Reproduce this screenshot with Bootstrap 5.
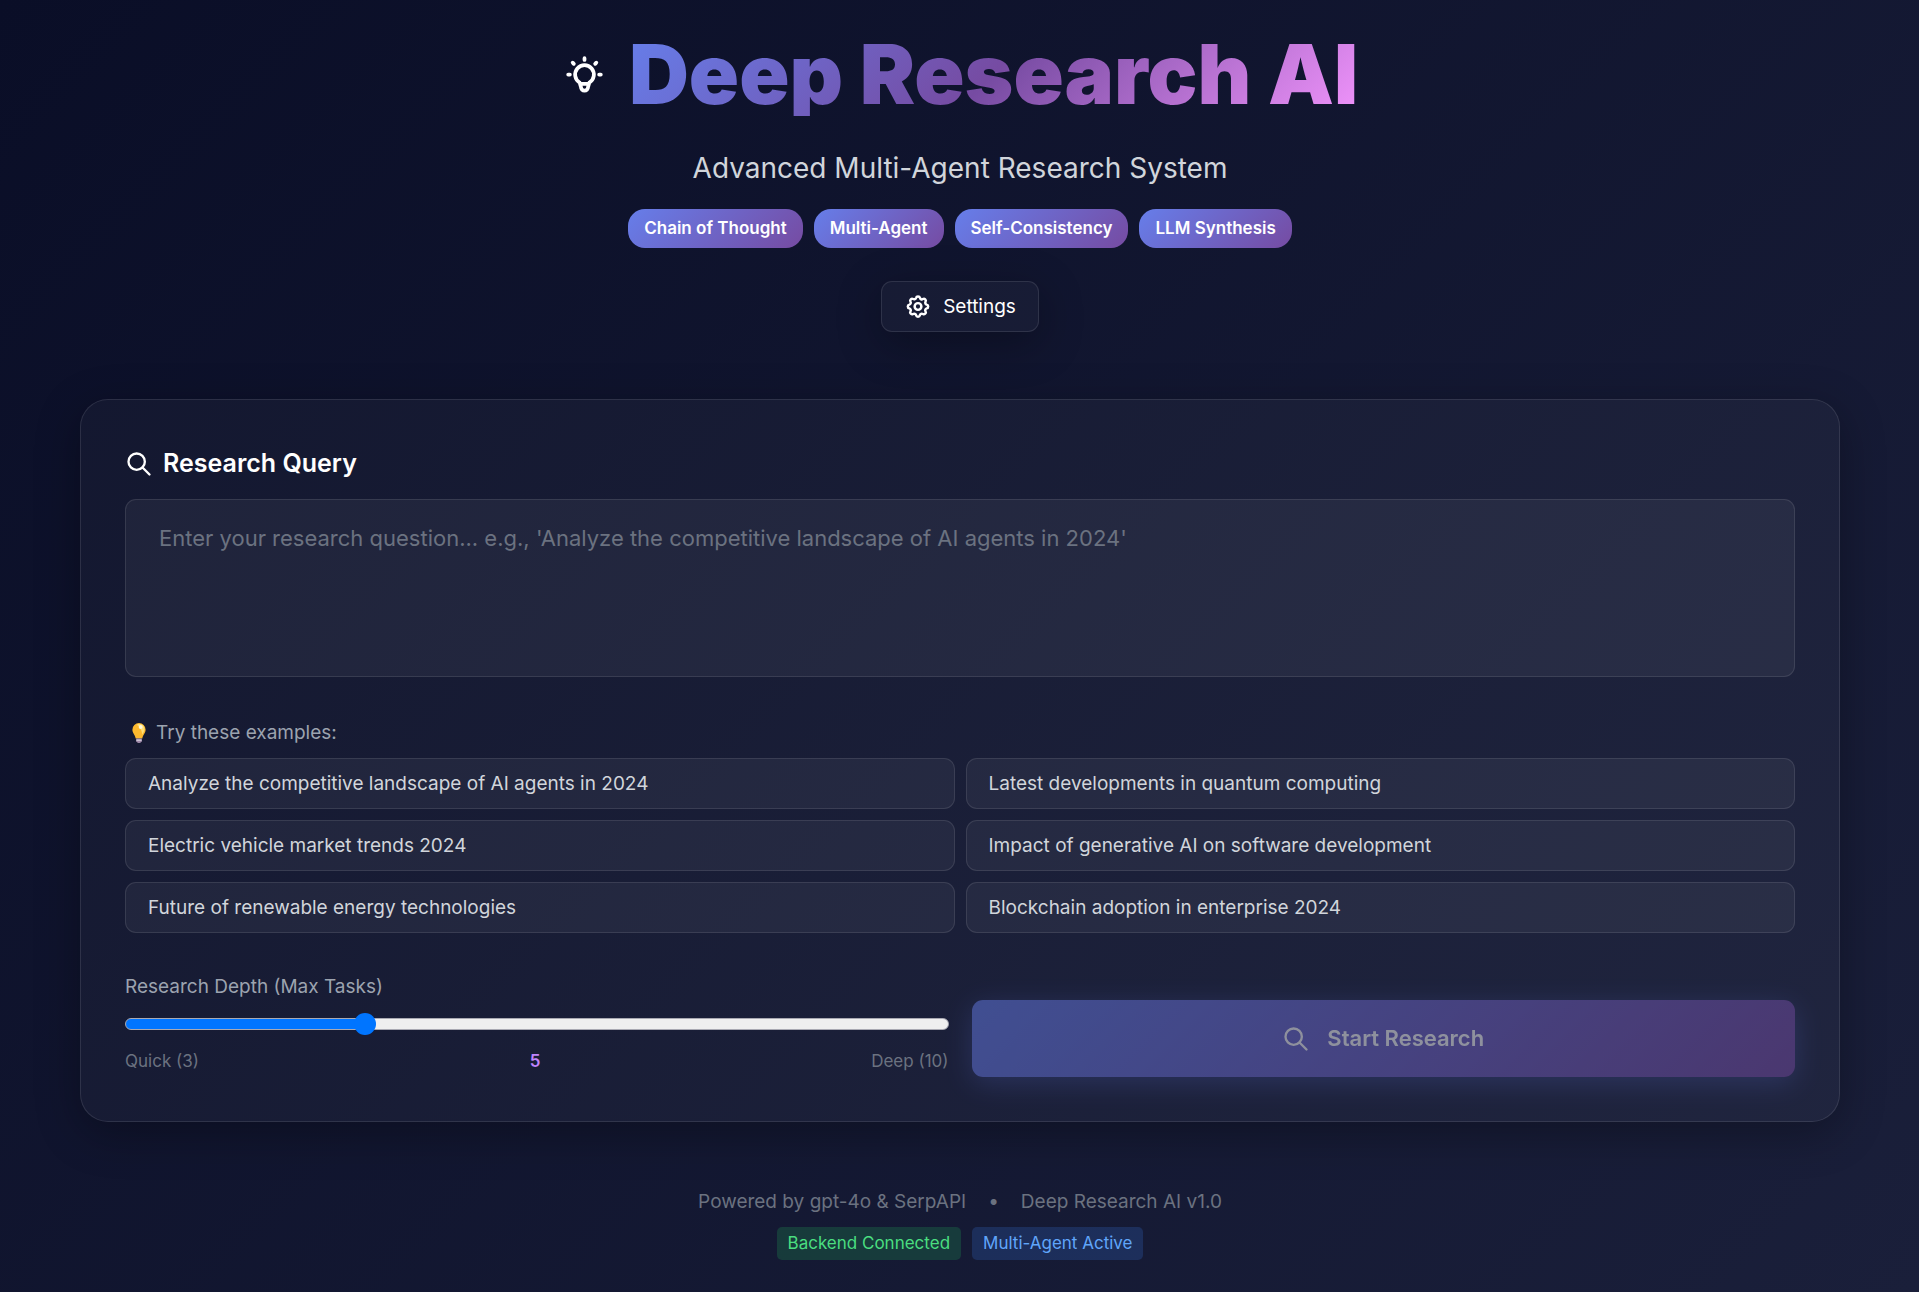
<!DOCTYPE html>
<html lang="en">
<head>
<meta charset="utf-8">
<meta name="viewport" content="width=device-width, initial-scale=1">
<title>Deep Research AI</title>
<link rel="stylesheet" href="https://cdn.jsdelivr.net/npm/bootstrap@5.3.0/dist/css/bootstrap.min.css">
<style>
body{font-family:Inter,"Noto Sans",sans-serif;font-size:19px;line-height:27px;color:#fff;min-height:100vh;background:linear-gradient(135deg,#0a0e27 0%,#1a1f3a 100%) fixed}
.page{padding:32px 79px 32px 80px}
.hero-title{font-size:83px;line-height:84px;font-weight:900;background:linear-gradient(135deg,#667eea 0%,#764ba2 50%,#f093fb 100%);-webkit-background-clip:text;background-clip:text;color:transparent}
.hero-icon{width:45px;height:45px}
.hero-row{gap:22px;margin-bottom:33px}
.tagline{font-size:28px;line-height:39px;color:#d1d5db;margin-bottom:21px}
.gap-tight{gap:11px}
.pill{font-size:17px;line-height:23px;font-weight:600;padding:8px 16px;border-radius:17px;background:linear-gradient(135deg,#667eea,#764ba2)}
.glass{background:rgba(255,255,255,.03);border:1px solid rgba(255,255,255,.1);box-shadow:0 11px 45px rgba(0,0,0,.3)}
.settings-btn{color:#fff;font-size:19px;line-height:27px;font-weight:400;padding:11px 22px;border-radius:11px;gap:11px;margin-top:33px}
.settings-btn svg{width:28px;height:27px}
.panel{margin-top:67px;padding:44px;border-radius:28px}
.panel-title{font-size:25px;line-height:39px;font-weight:600;margin-bottom:16px;gap:10px}
.panel-title svg,.go-btn svg{width:28px;height:28px}
.field{background:rgba(255,255,255,.05);border:1px solid rgba(255,255,255,.1);border-radius:11px;color:#fff}
.query{height:178px;padding:21px 33px;font-size:22px;line-height:34px;resize:none}
.query::placeholder{color:#6b7280;opacity:1}
.dim{color:#9ca3af}
.faint{color:#6b7280}
.examples-head{margin:42px 0 12px;padding-left:3px;gap:6px}
.bulb{width:22px;height:22px}
.example-btn{color:#d1d5db;line-height:27px;text-align:left;padding:11px 22px;width:100%}
.examples{--bs-gutter-x:11px;--bs-gutter-y:11px}
.run-row{--bs-gutter-x:23px;margin-top:40px}
.depth{display:block;-webkit-appearance:none;appearance:none;width:100%;height:22px;margin:13px 0 10px;background:transparent}
.depth::-webkit-slider-runnable-track{height:12px;border-radius:6px;border:1px solid #a9a9b2;background:linear-gradient(90deg,#0075ff var(--fill),#efefef var(--fill))}
.depth::-webkit-slider-thumb{-webkit-appearance:none;width:22px;height:22px;border-radius:50%;background:#0075ff;margin-top:-6px}
.tiny{font-size:17px;line-height:32px}
.depth-value{color:#c084fc;font-weight:600}
.go-btn,.go-btn:disabled{width:100%;border:0;border-radius:11px;padding:22px;font-size:22px;line-height:33px;font-weight:600;gap:17px;color:#fff;opacity:.5;background:linear-gradient(135deg,#667eea,#764ba2);box-shadow:0 6px 28px rgba(102,126,234,.4)}
.foot{margin-top:66px}
.foot-line{gap:22px;margin-bottom:12px}
.status{font-size:17px;line-height:23px;padding:5px 11px;border-radius:5px}
.status-ok{background:rgba(34,197,94,.2);color:#4ade80}
.status-info{background:rgba(59,130,246,.2);color:#60a5fa}
</style>
</head>
<body>
<div class="page">
<header class="d-flex flex-column align-items-center">
<div class="hero-row d-flex align-items-center justify-content-center">
<svg class="hero-icon" viewBox="0 0 24 24" fill="none" stroke="#fff" stroke-width="2" stroke-linecap="round" stroke-linejoin="round" aria-hidden="true"><path d="M3.300 12h.9m7.800-8.700v.9m7.800 7.800h.9M5.700 5.700l.6.6m12-.6-.6.6M9.400 16.300a5 5 0 1 1 5.200 0M9.400 16.300l.7 2.400a1.900 1.900 0 0 0 3.800 0l.7-2.400M9.800 17h4.400"/></svg>
<h1 class="hero-title mb-0">Deep Research AI</h1>
</div>
<p class="tagline">Advanced Multi-Agent Research System</p>
<div class="d-flex flex-wrap justify-content-center gap-tight">
<span class="pill">Chain of Thought</span><span class="pill">Multi-Agent</span><span class="pill">Self-Consistency</span><span class="pill">LLM Synthesis</span>
</div>
<button type="button" class="settings-btn glass d-inline-flex align-items-center">
<svg viewBox="0 0 24 24" fill="none" stroke="currentColor" stroke-width="2.200" stroke-linejoin="round" aria-hidden="true"><path d="M10.300 4.300c.4-1.700 3-1.700 3.400 0a1.700 1.700 0 0 0 2.600 1.100c1.500-1 3.300.8 2.400 2.400a1.700 1.700 0 0 0 1 2.500c1.800.4 1.800 3 0 3.400a1.700 1.700 0 0 0-1 2.600c.9 1.500-.9 3.300-2.400 2.400a1.700 1.700 0 0 0-2.600 1c-.4 1.800-3 1.800-3.400 0a1.700 1.700 0 0 0-2.600-1c-1.500.9-3.300-.9-2.400-2.400a1.700 1.700 0 0 0-1-2.600c-1.800-.4-1.800-3 0-3.400a1.700 1.700 0 0 0 1-2.600c-.9-1.500.9-3.300 2.400-2.400 1 .6 2.300.1 2.600-1z"/><circle cx="12" cy="12" r="3"/></svg>
Settings</button>
</header>
<main class="panel glass">
<label for="query" class="panel-title d-flex align-items-center">
<svg viewBox="0 0 24 24" fill="none" stroke="currentColor" stroke-width="2" stroke-linecap="round" aria-hidden="true"><circle cx="10" cy="10" r="7"/><path d="m21 21-6-6"/></svg>
Research Query</label>
<textarea id="query" class="field query d-block w-100" placeholder="Enter your research question... e.g., 'Analyze the competitive landscape of AI agents in 2024'"></textarea>
<div class="examples-head dim d-flex align-items-center">
<svg class="bulb" viewBox="0 0 20 20" aria-hidden="true"><path d="M10 1a6 6 0 0 0-6 6c0 3 2.500 4.500 3 8h6c.5-3.500 3-5 3-8a6 6 0 0 0-6-6z" fill="#fdb92e"/><path d="M10 1.500a5 5 0 0 1 5 5c0 2-1.200 3-2 5-.5-4-2-7-5-9z" fill="#ffdf75"/><circle cx="11.500" cy="4.500" r="1.800" fill="#fff8d8"/><path d="M7.500 15h5v2.500L11 19H9l-1.500-1.500z" fill="#9b86a5"/><path d="M7.500 16.500h5" stroke="#e3dcea"/></svg>
<span>Try these examples:</span>
</div>
<div class="row examples">
<div class="col-6"><button type="button" class="field example-btn">Analyze the competitive landscape of AI agents in 2024</button></div>
<div class="col-6"><button type="button" class="field example-btn">Latest developments in quantum computing</button></div>
<div class="col-6"><button type="button" class="field example-btn">Electric vehicle market trends 2024</button></div>
<div class="col-6"><button type="button" class="field example-btn">Impact of generative AI on software development</button></div>
<div class="col-6"><button type="button" class="field example-btn">Future of renewable energy technologies</button></div>
<div class="col-6"><button type="button" class="field example-btn">Blockchain adoption in enterprise 2024</button></div>
</div>
<div class="row run-row align-items-end">
<div class="col-6">
<label for="depth" class="dim d-block">Research Depth (Max Tasks)</label>
<input type="range" id="depth" class="depth" min="3" max="10" value="5" style="--fill:29.200%">
<div class="tiny faint d-flex justify-content-between"><span>Quick (3)</span><span class="depth-value">5</span><span>Deep (10)</span></div>
</div>
<div class="col-6">
<button type="button" class="go-btn d-flex align-items-center justify-content-center" disabled>
<svg viewBox="0 0 24 24" fill="none" stroke="currentColor" stroke-width="2" stroke-linecap="round" aria-hidden="true"><circle cx="10" cy="10" r="7"/><path d="m21 21-6-6"/></svg>
Start Research</button>
</div>
</div>
</main>
<footer class="foot faint d-flex flex-column align-items-center">
<div class="foot-line d-flex"><span>Powered by gpt-4o &amp; SerpAPI</span><span>•</span><span>Deep Research AI v1.0</span></div>
<div class="d-flex gap-tight"><span class="status status-ok">Backend Connected</span><span class="status status-info">Multi-Agent Active</span></div>
</footer>
</div>
<script src="https://cdn.jsdelivr.net/npm/bootstrap@5.3.0/dist/js/bootstrap.bundle.min.js"></script>
</body>
</html>
